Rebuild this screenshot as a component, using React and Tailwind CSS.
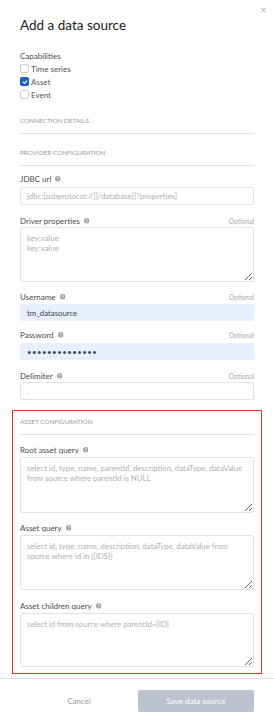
import React from "react";

const Help = () => (
  <svg width="5.5" height="5.5" viewBox="0 0 12 12" className="inline-block ml-[4px] align-middle relative top-[-1px]">
    <circle cx="6" cy="6" r="6" fill="#a0a0a0" />
    <path d="M4.3 4.6a1.7 1.7 0 1 1 2.4 1.5c-.5.3-.7.6-.7 1.1v.4" stroke="#fff" strokeWidth="1.4" fill="none" strokeLinecap="round" />
    <circle cx="6" cy="9.3" r="0.8" fill="#fff" />
  </svg>
);

const Label = ({ text, optional, mb = "mb-[1px]" }) => (
  <div className={`flex items-center justify-between h-[12px] ${mb}`}>
    <span className="text-[8px] leading-[12px] text-[#4a4a4a]">
      {text}
      <Help />
    </span>
    {optional && <span className="text-[6.6px] leading-[12px] text-[#a8a8a8]">Optional</span>}
  </div>
);

const inputCls =
  "block w-full border border-[#e3e3e3] rounded-[2px] px-[6px] text-[7.8px] outline-none placeholder:text-[#b0b0b0] text-[#444]";

const Section = ({ text, className = "" }) => (
  <div className={`border-b border-[#e2e2e2] ${className}`}>
    <div className="text-[6.4px] leading-[12px] h-[12px] text-[#9a9a9a] uppercase">{text}</div>
  </div>
);

const Check = ({ checked, label }) => (
  <div className="flex items-center h-[13px]">
    {checked ? (
      <span className="w-[9px] h-[9px] rounded-[2px] bg-[#1565c0] flex items-center justify-center">
        <svg width="6" height="6" viewBox="0 0 10 10">
          <path d="M2 5.2l2 2L8.2 3" stroke="#fff" strokeWidth="1.8" fill="none" strokeLinecap="round" strokeLinejoin="round" />
        </svg>
      </span>
    ) : (
      <span className="w-[9px] h-[9px] rounded-[2px] border border-[#cfcfcf] bg-white" />
    )}
    <span className="ml-[2px] text-[8px] text-[#555]">{label}</span>
  </div>
);

export default function App() {
  return (
    <div
      className="relative w-[274px] h-[720px] bg-white overflow-hidden flex flex-col"
      style={{ fontFamily: "Lato, 'Open Sans', sans-serif" }}
    >
      <button className="absolute right-[7px] top-[5px] text-[#b5b5b5] text-[8px] leading-[10px]">✕</button>
      <div className="px-5 flex flex-col">
        <h1 className="mt-[15px] text-[13.5px] leading-[20px] text-[#222] font-normal">Add a data source</h1>

        <div className="mt-[15px] text-[8px] leading-[12px] h-[12px] text-[#4a4a4a]">Capabilities</div>
        <div className="flex flex-col">
          <Check label="Time series" />
          <Check checked label="Asset" />
          <Check label="Event" />
        </div>

        <Section text="Connection details" className="mt-[14px] pb-[6px]" />
        <Section text="Provider configuration" className="mt-[13px] pb-[6px]" />

        <div className="mt-[7px]">
          <Label text="JDBC url" mb="mb-[2px]" />
          <input className={`${inputCls} h-[18px]`} placeholder="jdbc:[subprotocol://][/database][?properties]" />
        </div>

        <div className="mt-[10px]">
          <Label text="Driver properties" optional mb="mb-0" />
          <textarea
            className={`${inputCls} h-[55px] py-[5px] leading-[10px] resize-y`}
            placeholder={"key;value\nkey;value"}
          />
        </div>

        <div className="mt-[9px]">
          <Label text="Username" optional />
          <input className={`${inputCls} h-[17px] bg-[#e8f0fe] border-[#e8f0fe]`} defaultValue="tm_datasource" />
        </div>

        <div className="mt-[8px]">
          <Label text="Password" optional mb="mb-[2px]" />
          <input
            type="password"
            className={`${inputCls} h-[17px] bg-[#e8f0fe] border-[#e8f0fe] text-[#111] tracking-[0.5px]`}
            defaultValue="tmdatasource12"
          />
        </div>

        <div className="mt-[10px]">
          <Label text="Delimiter" optional mb="mb-0" />
          <input className={`${inputCls} h-[18px]`} placeholder="," />
        </div>
      </div>

      <div className="mx-[12px] mt-[10px] border-[1.5px] border-[#f0321e] px-[7px] pt-[5px] pb-[6px] flex flex-col">
        <Section text="Asset configuration" className="pb-[6px]" />

        <div className="mt-[9px]">
          <Label text="Root asset query" />
          <textarea
            className={`${inputCls} h-[56px] py-[5px] leading-[10px]`}
            placeholder="select id, type, name, parentId, description, dataType, dataValue from source where parentId is NULL"
          />
        </div>
        <div className="mt-[9px]">
          <Label text="Asset query" />
          <textarea
            className={`${inputCls} h-[55px] py-[5px] leading-[10px]`}
            placeholder="select id, type, name, description, dataType, dataValue from source where id in ({IDS})"
          />
        </div>
        <div className="mt-[10px]">
          <Label text="Asset children query" />
          <textarea
            className={`${inputCls} h-[54px] py-[5px] leading-[10px]`}
            placeholder="select id from source where parentId={ID}"
          />
        </div>
      </div>

      <div className="mt-[4px] border-t border-[#e2e2e2] flex px-5 pt-[11px]">
        <button className="flex-1 h-[22px] text-[8px] text-[#9a9a9a]">Cancel</button>
        <button className="w-[116px] h-[22px] rounded-[2px] bg-[#bcc2cf] text-white text-[8px]">Save data source</button>
      </div>
    </div>
  );
}
